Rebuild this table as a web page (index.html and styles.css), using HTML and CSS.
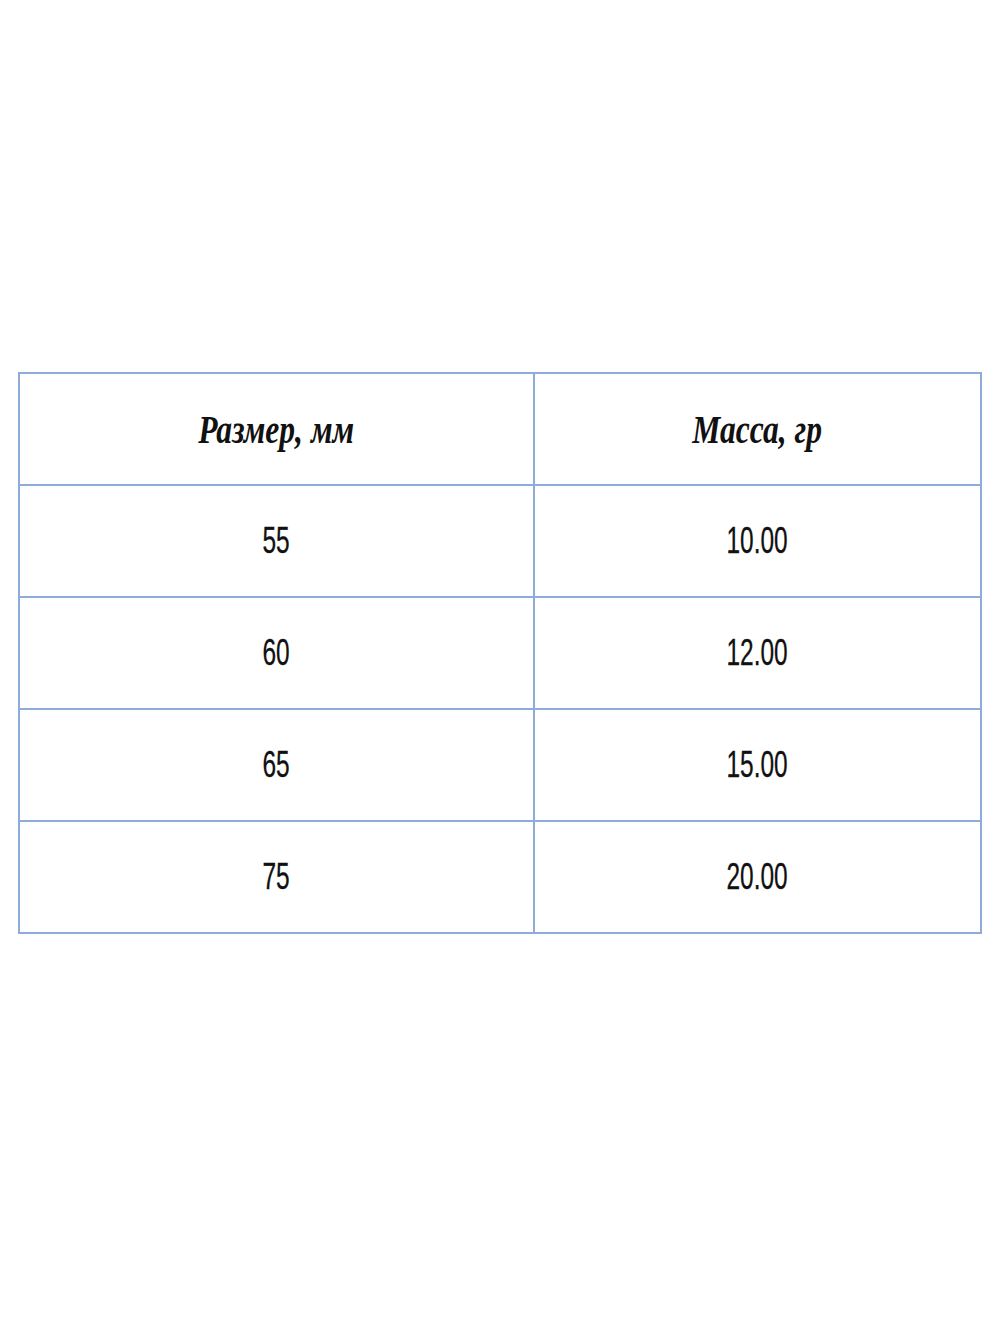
FILE: index.html
```html
<!DOCTYPE html>
<html lang="ru">
<head>
<meta charset="utf-8">
<title>Размеры</title>
<link rel="stylesheet" href="styles.css">
</head>
<body>
<div class="page">
  <table class="sizes">
    <colgroup><col class="c1"><col class="c2"></colgroup>
    <thead>
      <tr><th><span class="hd">Размер, мм</span></th><th><span class="hd">Масса, гр</span></th></tr>
    </thead>
    <tbody>
      <tr><td><span class="num">55</span></td><td><span class="num">10.00</span></td></tr>
      <tr><td><span class="num">60</span></td><td><span class="num">12.00</span></td></tr>
      <tr><td><span class="num">65</span></td><td><span class="num">15.00</span></td></tr>
      <tr><td><span class="num">75</span></td><td><span class="num">20.00</span></td></tr>
    </tbody>
  </table>
</div>
</body>
</html>
```
FILE: styles.css
```css
html, body {
  margin: 0;
  padding: 0;
  background: #ffffff;
}
.page {
  width: 1000px;
  height: 1333px;
  padding-top: 372px;
  padding-left: 18px;
  box-sizing: border-box;
}
.sizes {
  border-collapse: collapse;
  width: 962px;
  table-layout: fixed;
}
.c1 { width: 515px; }
.c2 { width: 447px; }
.sizes th, .sizes td {
  border: 2px solid #8eabdb;
  text-align: center;
  vertical-align: middle;
  padding: 0;
  height: 110px;
  color: #111111;
}
.hd {
  display: inline-block;
  font-family: "Liberation Serif", serif;
  font-weight: bold;
  font-style: italic;
  font-size: 41px;
  transform: scaleX(0.77);
}
.num {
  display: inline-block;
  font-family: "Liberation Sans", sans-serif;
  font-size: 36px;
  transform: scaleX(0.68);
  -webkit-text-stroke: 0.3px #111111;
}
```
